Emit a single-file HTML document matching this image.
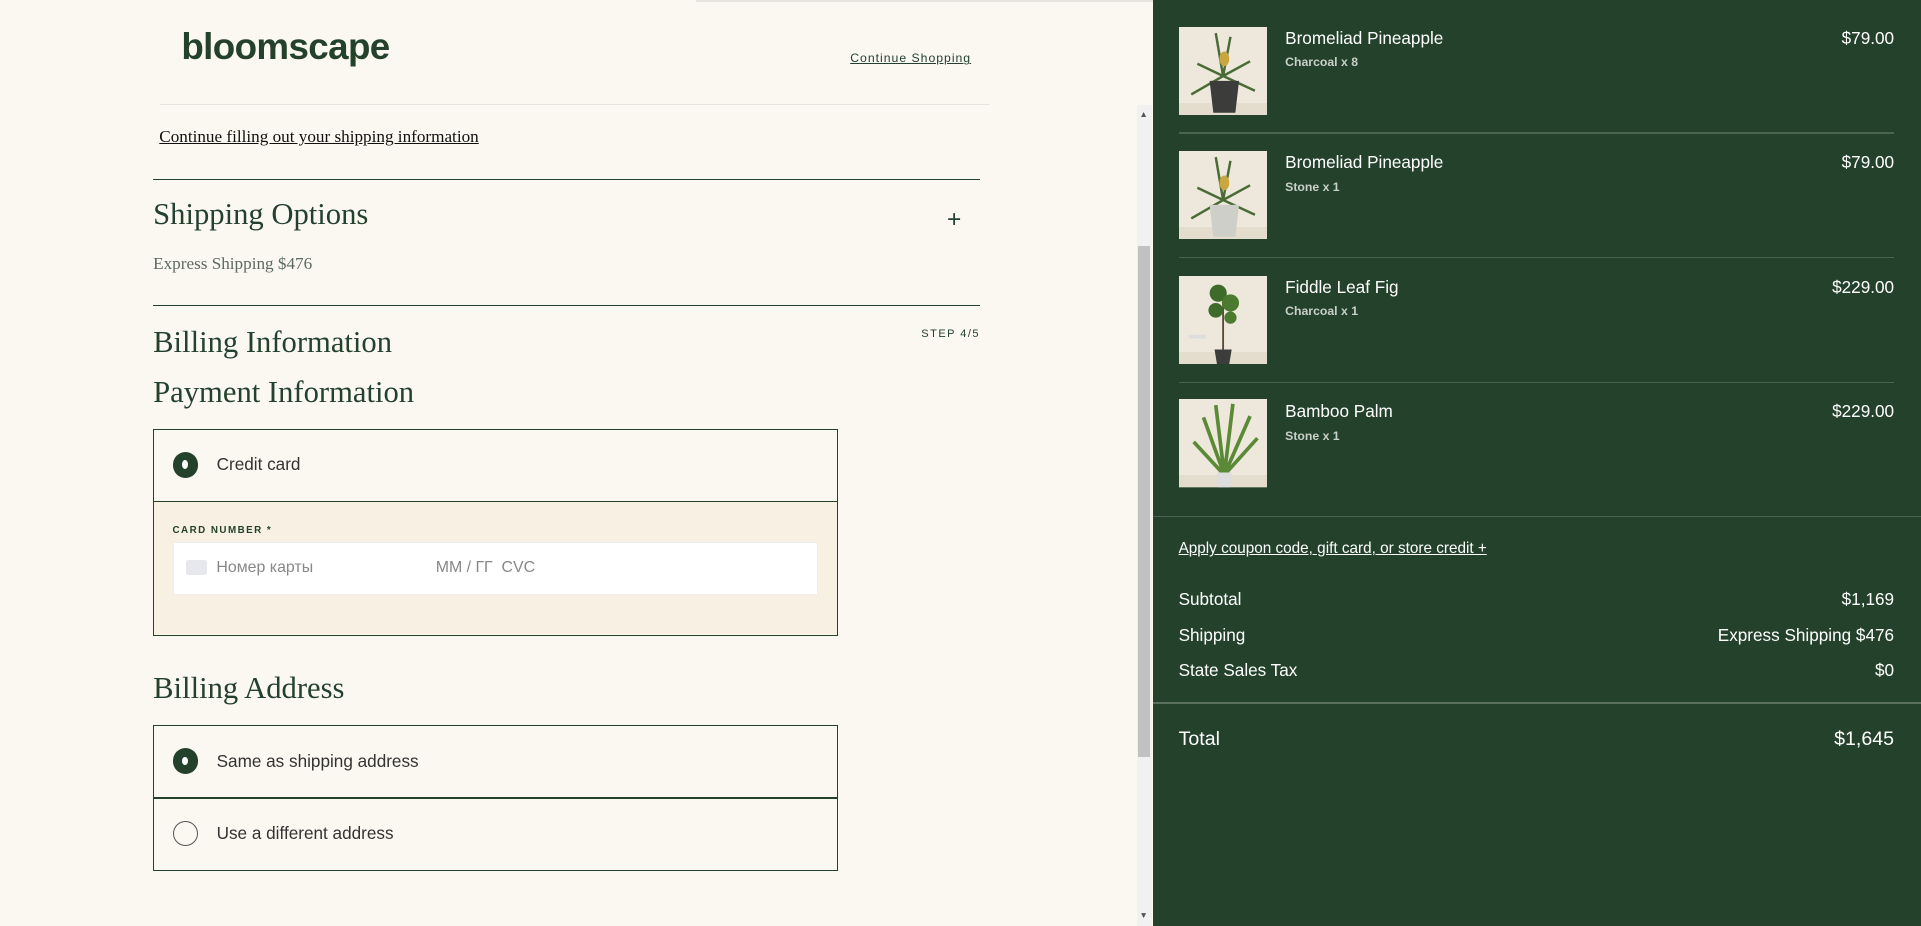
<!DOCTYPE html>
<html><head><meta charset="utf-8"><style>
html{zoom:1.22513}
*{box-sizing:border-box;margin:0;padding:0}
body{width:1568px;height:756px;overflow:hidden;background:#fbf8f1;font-family:"Liberation Sans",sans-serif;color:#23412b;position:relative}
.a{position:absolute}
.serif{font-family:"Liberation Serif",serif}
.r{width:21px;height:21px;border-radius:50%;background:#23412b;position:absolute;left:15px}
.r:after{content:"";position:absolute;left:8px;top:7px;width:5px;height:7px;border-radius:50%;background:#fff}
.ro{width:21px;height:21px;border-radius:50%;border:1px solid #555;position:absolute;left:15px}
.lbl{position:absolute;left:51px;font-size:14px;color:#333}
.panel{left:941px;top:0;width:627px;height:756px;background:#23412b;color:#fff}
.it .t{position:absolute;left:108px;font-size:14px}
.it .s{position:absolute;left:108px;font-size:10px;color:#c9cfc9;font-weight:bold}
.it .p{position:absolute;right:22px;font-size:14px}
.hr{position:absolute;left:21px;width:584px;height:1px;background:#4b6451}
.row{position:absolute;left:21px;right:22px;font-size:14px;display:flex;justify-content:space-between}
</style></head><body>
<div class="a" style="left:568px;top:0;width:373px;height:2px;background:#e6e4df"></div>
<div class="a" style="left:148px;top:21px;font-size:30px;font-weight:bold;letter-spacing:-0.5px;color:#23412b">bloomscape</div>
<div class="a" style="left:694px;top:42px;font-size:10px;letter-spacing:.8px;text-decoration:underline;color:#23412b">Continue Shopping</div>
<div class="a" style="left:131px;top:85px;width:677px;height:1px;background:#e6e4df"></div>
<div class="a serif" style="left:130px;top:104px;font-size:14px;text-decoration:underline;color:#111">Continue filling out your shipping information</div>
<div class="a" style="left:125px;top:146px;width:675px;height:1px;background:#23412b"></div>
<div class="a serif" style="left:125px;top:161px;font-size:25px">Shipping Options</div>
<div class="a" style="left:773px;top:168px;font-size:20px">+</div>
<div class="a serif" style="left:125px;top:207px;font-size:14px;color:#5d6a60">Express Shipping $476</div>
<div class="a" style="left:125px;top:249px;width:675px;height:1px;background:#23412b"></div>
<div class="a serif" style="left:125px;top:265px;font-size:25px">Billing Information</div>
<div class="a" style="left:752px;top:268px;font-size:9px;letter-spacing:1.2px">STEP 4/5</div>
<div class="a serif" style="left:125px;top:306px;font-size:25px">Payment Information</div>
<div class="a" style="left:125px;top:350px;width:559px;height:169px;border:1px solid #23412b">
 <div class="r" style="top:18px"></div><div class="lbl" style="top:20px">Credit card</div>
 <div class="a" style="left:0;top:58px;width:557px;height:109px;background:#f7f0e3;border-top:1px solid #23412b">
  <div class="a" style="left:15px;top:19px;font-size:8px;font-weight:bold;letter-spacing:1.2px">CARD NUMBER *</div>
  <div class="a" style="left:15px;top:33px;width:527px;height:43px;background:#fff;border:1px solid #eee">
   <div class="a" style="left:10px;top:14px;width:17px;height:12px;background:#e6e8ee;border-radius:2px"></div>
   <div class="a" style="left:35px;top:13px;font-size:13px;color:#888">Номер карты</div>
   <div class="a" style="left:214px;top:13px;font-size:13px;color:#888">MM / ГГ&nbsp; CVC</div>
  </div>
 </div>
</div>
<div class="a serif" style="left:125px;top:548px;font-size:25px">Billing Address</div>
<div class="a" style="left:125px;top:592px;width:559px;height:119px;border:1px solid #23412b">
 <div class="r" style="top:18px"></div><div class="lbl" style="top:20px">Same as shipping address</div>
 <div class="a" style="left:0;top:58px;width:557px;height:1px;background:#23412b"></div>
 <div class="ro" style="top:77px"></div><div class="lbl" style="top:79px">Use a different address</div>
</div>
<div class="a" style="left:928px;top:86px;width:12px;height:670px;background:#f1f1f1"></div>
<div class="a" style="left:929px;top:201px;width:10px;height:417px;background:#c1c1c1"></div>
<div class="a" style="left:930px;top:89px;font-size:7px;color:#555">▲</div>
<div class="a" style="left:930px;top:743px;font-size:7px;color:#555">▼</div>

<div class="a panel">
 <svg width="0" height="0" style="position:absolute"><defs>
 <g id="pl"><rect width="72" height="72" fill="#eee8dc"/><rect y="62" width="72" height="10" fill="#e4dccc"/></g></defs></svg>
 <div class="a it" style="left:0;top:22px;width:627px">
  <svg class="a" style="left:21px" width="72" height="72"><use href="#pl"/><path d="M36 40 L30 5 M36 40 L42 8 M36 40 L15 30 M36 40 L58 28 M36 40 L10 55 M36 40 L62 52" stroke="#4a6b35" stroke-width="2"/><ellipse cx="37" cy="26" rx="4" ry="6" fill="#c9a640"/><path d="M25 44 h24 l-3 26 h-18z" fill="#3c3c3a"/></svg>
  <div class="t" style="top:1px">Bromeliad Pineapple</div><div class="s" style="top:23px">Charcoal x 8</div><div class="p" style="top:1px">$79.00</div>
 </div>
 <div class="hr" style="top:108px"></div>
 <div class="a it" style="left:0;top:123px;width:627px">
  <svg class="a" style="left:21px" width="72" height="72"><use href="#pl"/><path d="M36 40 L30 5 M36 40 L42 8 M36 40 L15 30 M36 40 L58 28 M36 40 L10 55 M36 40 L62 52" stroke="#4a6b35" stroke-width="2"/><ellipse cx="37" cy="26" rx="4" ry="6" fill="#c9a640"/><path d="M25 44 h24 l-3 26 h-18z" fill="#cfcfca"/></svg>
  <div class="t" style="top:1px">Bromeliad Pineapple</div><div class="s" style="top:24px">Stone x 1</div><div class="p" style="top:1px">$79.00</div>
 </div>
 <div class="hr" style="top:210px"></div>
 <div class="a it" style="left:0;top:225px;width:627px">
  <svg class="a" style="left:21px" width="72" height="72"><use href="#pl"/><line x1="36" y1="20" x2="36" y2="62" stroke="#5a4a35" stroke-width="1.5"/><circle cx="32" cy="14" r="7" fill="#3f6b2a"/><circle cx="42" cy="22" r="7" fill="#4c7a30"/><circle cx="30" cy="28" r="6" fill="#3f6b2a"/><circle cx="42" cy="34" r="5" fill="#4c7a30"/><path d="M29 60 h14 l-2 12 h-10z" fill="#3c3c3a"/><rect x="8" y="48" width="14" height="3" fill="#ddd"/></svg>
  <div class="t" style="top:1px">Fiddle Leaf Fig</div><div class="s" style="top:23px">Charcoal x 1</div><div class="p" style="top:1px">$229.00</div>
 </div>
 <div class="hr" style="top:312px"></div>
 <div class="a it" style="left:0;top:326px;width:627px">
  <svg class="a" style="left:21px" width="72" height="72"><use href="#pl"/><path d="M37 62 L30 5 M37 62 L44 4 M37 62 L20 15 M37 62 L58 14 M37 62 L12 35 M37 62 L64 32" stroke="#5b8a36" stroke-width="3"/><path d="M31 60 h12 l-1 12 h-10z" fill="#ddd"/></svg>
  <div class="t" style="top:1px">Bamboo Palm</div><div class="s" style="top:24px">Stone x 1</div><div class="p" style="top:1px">$229.00</div>
 </div>
 <div class="a" style="left:0;top:421px;width:627px;height:1px;background:#4b6451"></div>
 <div class="a" style="left:21px;top:441px;font-size:12.5px;text-decoration:underline">Apply coupon code, gift card, or store credit +</div>
 <div class="row" style="top:481px"><span>Subtotal</span><span>$1,169</span></div>
 <div class="row" style="top:510px"><span>Shipping</span><span>Express Shipping $476</span></div>
 <div class="row" style="top:539px"><span>State Sales Tax</span><span>$0</span></div>
 <div class="a" style="left:0;top:573px;width:627px;height:2px;background:#5a705e"></div>
 <div class="row" style="top:594px;font-size:16px"><span>Total</span><span>$1,645</span></div>
</div>
</body></html>
